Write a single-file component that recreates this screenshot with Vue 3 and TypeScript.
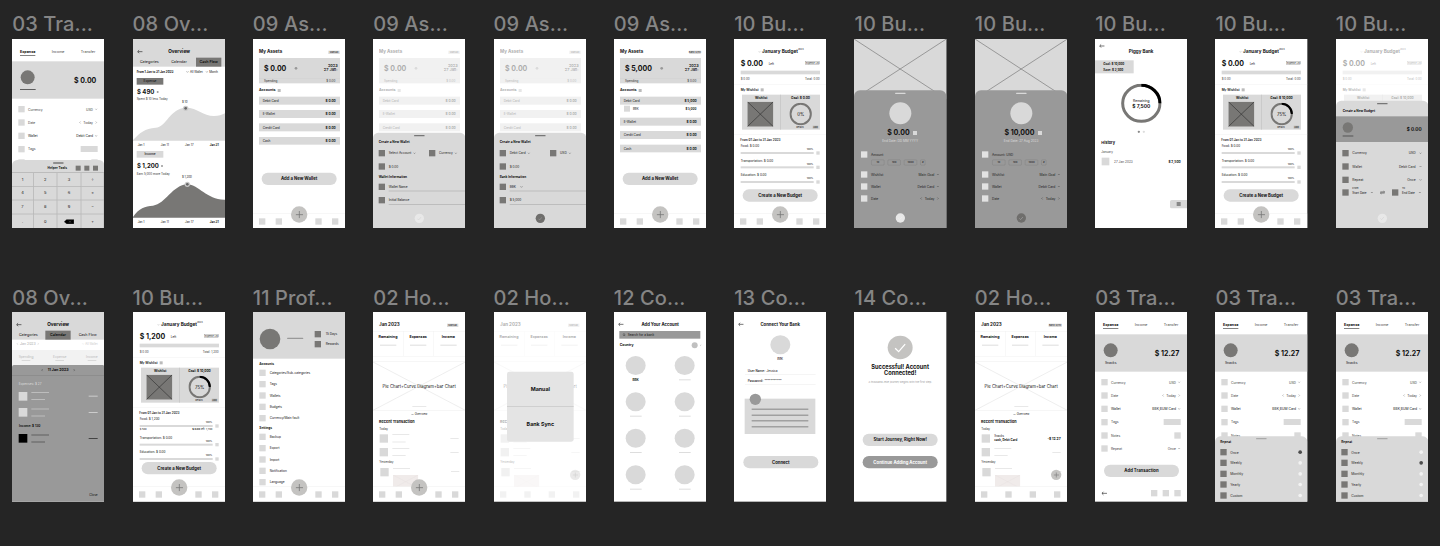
<script setup lang="ts">
import { h } from 'vue'
import type { FunctionalComponent } from 'vue'

type Kind =
  | 'transaction' | 'overview' | 'calendar' | 'assets' | 'budget' | 'wish'
  | 'piggy' | 'profile' | 'home' | 'bank' | 'connect' | 'success'

interface Board {
  name: string
  kind: Kind
  amount?: string
  sheet?: string
  faded?: boolean
  pct?: number
  selected?: number
  goal?: string
  filled?: boolean
}

const glyphs: Record<string, string> = {
  down: 'M2 4 L6 8 L10 4',
  up: 'M2 8 L6 4 L10 8',
  left: 'M8 2 L4 6 L8 10',
  right: 'M4 2 L8 6 L4 10',
  back: 'M12 6 H0.5 M4 2.5 L0.5 6 L4 9.5',
  check: 'M1 6.5 L4.5 10 L11 2.5',
  plus: 'M6 0 V12 M0 6 H12',
  swap: 'M0 4.5 H12 L9 2 M12 7.5 H0 L3 10',
  search: 'M8 8 L11.5 11.5 M9 5 A4 4 0 1 1 1 5 A4 4 0 1 1 9 5',
}

const Icon: FunctionalComponent<{ n: string }> = (p) =>
  h('svg', { viewBox: '0 0 12 12', class: 'ic' }, [
    h('path', { d: glyphs[p.n], fill: 'none', stroke: 'currentColor', 'stroke-width': 1.3 }),
  ])
Icon.props = ['n']

const rows: Board[][] = [
  [
    { name: '03 Tra...', kind: 'transaction', amount: '$ 0.00', sheet: 'keypad' },
    { name: '08 Ov...', kind: 'overview' },
    { name: '09 As...', kind: 'assets', amount: '$ 0.00' },
    { name: '09 As...', kind: 'assets', amount: '$ 0.00', sheet: 'wallet', faded: true },
    { name: '09 As...', kind: 'assets', amount: '$ 0.00', sheet: 'wallet', faded: true, filled: true },
    { name: '09 As...', kind: 'assets', amount: '$ 5,000', filled: true },
    { name: '10 Bu...', kind: 'budget', amount: '$ 0.00', pct: 0, goal: 'Goal: $ 0.00' },
    { name: '10 Bu...', kind: 'wish', amount: '$ 0.00' },
    { name: '10 Bu...', kind: 'wish', amount: '$ 10,000', filled: true },
    { name: '10 Bu...', kind: 'piggy' },
    { name: '10 Bu...', kind: 'budget', amount: '$ 0.00', pct: 75, goal: 'Goal: $ 10,000' },
    { name: '10 Bu...', kind: 'budget', amount: '$ 0.00', pct: 75, goal: 'Goal: $ 10,000', sheet: 'budget', faded: true },
  ],
  [
    { name: '08 Ov...', kind: 'calendar' },
    { name: '10 Bu...', kind: 'budget', amount: '$ 1,200', pct: 75, goal: 'Goal: $ 10,000', filled: true },
    { name: '11 Prof...', kind: 'profile' },
    { name: '02 Ho...', kind: 'home', sheet: 'fab' },
    { name: '02 Ho...', kind: 'home', sheet: 'modal', faded: true },
    { name: '12 Co...', kind: 'bank' },
    { name: '13 Co...', kind: 'connect' },
    { name: '14 Co...', kind: 'success' },
    { name: '02 Ho...', kind: 'home', filled: true },
    { name: '03 Tra...', kind: 'transaction', amount: '$ 12.27', filled: true },
    { name: '03 Tra...', kind: 'transaction', amount: '$ 12.27', filled: true, sheet: 'repeat', selected: 0 },
    { name: '03 Tra...', kind: 'transaction', amount: '$ 12.27', filled: true, sheet: 'repeat', selected: 1 },
  ],
]

const keys = ['1', '2', '3', '÷', '4', '5', '6', '×', '7', '8', '9', '−', '.', '0', 'del', '+']
const repeats = ['Once', 'Weekly', 'Monthly', 'Yearly', 'Custom']
const accounts = ['Debit Card', 'E-Wallet', 'Credit Card', 'Cash']
const categories = ['Food', 'Transportation', 'Education']
const profile = [
  { title: 'Accounts', items: ['Categories/Sub-categories', 'Tags', 'Wallets', 'Budgets', 'Currency/Main fault'] },
  { title: 'Settings', items: ['Backup', 'Export', 'Import', 'Notification', 'Language'] },
]
const charts = [
  {
    tag: 'Expense', dark: false, total: '$ 490', note: 'Spent $ 10 less Today', point: '$ 10', cx: 158, cy: 8,
    d: 'M0 105 V103 C22 80 35 69 68 66 C100 64 112 7 158 6 C195 6 210 31 243 31 C257 31 268 27 277 22 V105 Z',
  },
  {
    tag: 'Income', dark: true, total: '$ 1,200', note: 'Earn 5,000 more Today', point: '$ 1,200', cx: 163, cy: 5,
    d: 'M0 105 V103 C18 76 36 71 60 69 C98 64 118 7 163 5 C198 6 222 53 277 51 V105 Z',
  },
]
</script>

<template>
  <main class="canvas">
    <section v-for="(row, ri) in rows" :key="ri" class="strip" :class="{ second: ri === 1 }">
      <div v-for="(b, bi) in row" :key="bi" class="slot">
        <div class="name">{{ b.name }}</div>
        <div class="frame">
          <article class="board">
            <!-- Transaction -->
            <template v-if="b.kind === 'transaction'">
              <nav class="tx-tabs"><b>Expense</b><span>Income</span><span>Transfer</span></nav>
              <div class="tx-hero">
                <div class="who">
                  <i class="avatar"></i>
                  <span v-if="b.filled">Snacks</span><i v-else class="rule"></i>
                </div>
                <strong class="amount">{{ b.amount }}</strong>
              </div>
              <div class="tx-rows">
                <div class="line"><i class="sq"></i>Currency<span class="end">USD <Icon n="down" /></span></div>
                <div class="line"><i class="sq"></i>Date<span class="end"><Icon n="left" /> Today <Icon n="right" /></span></div>
                <div class="line dk"><i class="sq"></i>Wallet<span class="end">{{ b.filled ? 'BBK,BUM Card' : 'Debit Card' }} <Icon n="down" /></span></div>
                <div class="line"><i class="sq"></i>Tags<i class="end tagbox"></i></div>
                <div class="line"><i class="sq"></i>Notes<i class="end sq"></i></div>
                <div class="line"><i class="sq"></i>Repeat<span class="end">Once <Icon n="down" /></span></div>
              </div>
              <template v-if="!b.sheet">
                <div class="pill tx-pill">Add Transaction</div>
                <div class="tx-foot"><Icon n="back" class="back" /><i class="sq"></i><i class="sq"></i><i class="sq"></i></div>
              </template>
              <div v-else-if="b.sheet === 'keypad'" class="sheet keypad">
                <i class="handle"></i>
                <div class="tools"><b>Helper Tools</b><i></i><i></i><i></i></div>
                <div class="keys">
                  <span v-for="k in keys" :key="k">
                    <svg v-if="k === 'del'" class="del" viewBox="0 0 30 14"><path d="M0 7 L8 0 H30 V14 H8 Z M15 4 L21 10 M21 4 L15 10" stroke="#999" /></svg>
                    <template v-else>{{ k }}</template>
                  </span>
                </div>
              </div>
              <div v-else class="sheet repeat">
                <i class="handle lt"></i>
                <b>Repeat</b>
                <div v-for="(r, i) in repeats" :key="r" class="opt">
                  <i class="sq dark"></i>{{ r }}<i class="radio" :class="{ on: i === b.selected }"></i>
                </div>
              </div>
            </template>

            <!-- Overview -->
            <template v-else-if="b.kind === 'overview' || b.kind === 'calendar'">
              <header class="ov-head">
                <div class="ov-title"><Icon n="back" class="back" /><strong>Overview</strong></div>
                <nav>
                  <span>Categories</span>
                  <span :class="{ on: b.kind === 'calendar' }">Calendar</span>
                  <span :class="{ on: b.kind === 'overview' }">Cash Flow</span>
                </nav>
              </header>
              <template v-if="b.kind === 'overview'">
                <div class="ov-range"><b>From 1 Jan to 31 Jan 2023</b><span><Icon n="down" /> All Wallet</span><span><Icon n="down" /> Month</span></div>
                <section v-for="c in charts" :key="c.tag" class="flow" :class="{ dark: c.dark }">
                  <div class="tag">{{ c.tag }}</div>
                  <div class="total">{{ c.total }} <i></i></div>
                  <div class="note">{{ c.note }}</div>
                  <div class="point">{{ c.point }}</div>
                  <svg class="plot" viewBox="0 0 277 105">
                    <path :d="c.d" :fill="c.dark ? '#787775' : '#d9d9d9'" />
                    <circle :cx="c.cx" :cy="c.cy" r="8" fill="#c8c8c8" /><circle :cx="c.cx" :cy="c.cy" r="4" fill="#666" />
                  </svg>
                  <div class="axis"><span>Jan 1</span><span>Jan 11</span><span>Jan 17</span><b>Jan 31</b></div>
                </section>
              </template>
              <template v-else>
                <div class="cal-month"><span><Icon n="left" /> Jan 2023 <Icon n="right" /></span><small><Icon n="down" /> All Wallet</small></div>
                <div class="cal-sums"><span>Spending</span><span>Expense</span><span>Income</span></div>
                <div class="cal-body">
                  <div class="cal-day"><Icon n="left" /><b>11 Jan 2023</b><Icon n="right" /></div>
                  <div class="cal-cap">Expenses: $ 27</div>
                  <div v-for="n in 2" :key="n" class="cal-item"><i class="pic"></i><div><i></i><i></i></div><i class="val"></i></div>
                  <div class="cal-cap blk">Income: $ 130</div>
                  <div class="cal-item blk"><i class="pic"></i><div><i></i><i></i></div><i class="val"></i></div>
                  <div class="cal-close">Close</div>
                </div>
              </template>
            </template>

            <!-- Assets -->
            <template v-else-if="b.kind === 'assets'">
              <div class="content as" :class="{ faded: b.faded }">
                <div class="as-top"><strong>My Assets</strong><em>{{ b.filled && !b.faded ? 'Bank Sync' : 'Manual' }}</em></div>
                <div class="as-card">
                  <div class="as-main"><strong class="amount">{{ b.amount }}</strong><i></i><b>2023<br>27 Jan<u>›</u></b></div>
                  <div class="as-sub"><span>Spending</span><span>$ 0.00</span></div>
                </div>
                <div class="as-cap"><b>Accounts</b><i></i></div>
                <template v-for="(a, i) in accounts" :key="a">
                  <div class="as-row"><span>{{ a }}</span><b>{{ b.filled && !b.faded && i === 0 ? '$ 5,000' : '$ 0.00' }}</b></div>
                  <div v-if="b.filled && !b.faded && i === 0" class="as-child"><i class="sq"></i>BBK<b>$ 5,000</b></div>
                </template>
                <div class="pill as-pill" :class="{ tight: b.filled }">Add a New Wallet</div>
              </div>
              <div v-if="b.sheet" class="sheet wallet">
                <i class="handle"></i>
                <b class="cap">Create a New Wallet</b>
                <div class="two">
                  <div><i class="sq dark"></i>{{ b.filled ? 'Debit Card' : 'Select Account' }} <Icon n="down" /></div>
                  <div><i class="sq dark"></i>{{ b.filled ? 'USD' : 'Currency' }} <Icon n="down" /></div>
                </div>
                <div class="one"><i class="sq dark"></i>$ 0.00</div>
                <b class="cap">{{ b.filled ? 'Bank Information' : 'Wallet Information' }}</b>
                <div class="field"><i class="sq dark"></i><span>{{ b.filled ? 'BBK' : 'Wallet Name' }} <Icon v-if="b.filled" n="down" /></span></div>
                <div class="field"><i class="sq dark"></i><span>{{ b.filled ? '$ 5,000' : 'Initial Balance' }}</span></div>
                <div class="ok" :class="{ dk: b.filled }"><Icon n="check" /></div>
              </div>
            </template>

            <!-- Budget -->
            <template v-else-if="b.kind === 'budget'">
              <div class="content bu" :class="{ faded: b.faded, more: b.filled }">
                <div class="bu-title"><Icon n="down" /><strong>January Budget</strong><sup>2023</sup></div>
                <div class="bu-amt"><strong class="amount">{{ b.amount }}</strong><span>Left</span><em>Expense List</em></div>
                <div class="bu-bar"></div>
                <div class="bu-lab"><span>$ 0.00</span><span>Total: {{ b.filled ? '1,200' : '0.00' }}</span></div>
                <div class="bu-cap"><b>My Wishlist</b><i></i></div>
                <div class="bu-card">
                  <div>
                    <b>Wishlist</b>
                    <svg class="cross" viewBox="0 0 78 75"><rect width="78" height="75" fill="#787775" /><path d="M0 0 L78 75 M78 0 L0 75" stroke="#333" stroke-width="2" /></svg>
                  </div>
                  <div>
                    <b>{{ b.goal }}</b>
                    <svg class="ring" viewBox="0 0 68 68">
                      <circle cx="34" cy="34" r="30.5" fill="none" stroke="#787775" stroke-width="6" />
                      <path v-if="b.pct" d="M34 3.5 A30.5 30.5 0 0 1 64.5 34" fill="none" stroke="#000" stroke-width="6" />
                      <text x="34" y="39" text-anchor="middle" font-size="13">{{ b.pct }}%</text>
                    </svg>
                    <small>Details ⌵<em>Add</em></small>
                  </div>
                </div>
                <div class="bu-range">From 01 Jan to 31 Jan 2023</div>
                <div v-for="(c, i) in categories" :key="c" class="bu-cat">
                  <div class="cl">{{ c }}: $ {{ b.filled && i === 0 ? '1,200' : '0.00' }}</div>
                  <div class="cv">100%</div>
                  <div class="cb"><i></i><u></u></div>
                  <div v-if="b.filled && i === 0" class="cx"><span>$ 500</span><span><b>$ 0.00</b> left: 1,700</span></div>
                </div>
                <div class="pill bu-pill">Create a New Budget</div>
              </div>
              <div v-if="b.sheet" class="sheet newbudget">
                <i class="handle"></i>
                <b class="cap">Create a New Budget</b>
                <div class="band"><div><i></i><u></u></div><strong>$ 0.00</strong></div>
                <div class="nb-row"><i class="sq dark"></i>Currency<span>USD <Icon n="down" /></span></div>
                <div class="nb-row"><i class="sq dark"></i>Wallet<span>Debit Card <Icon n="down" /></span></div>
                <div class="nb-row"><i class="sq dark"></i>Repeat<span>Once <Icon n="down" /></span></div>
                <div class="nb-dates">
                  <i class="sq dark"></i><div><small>From</small>Start Date</div><Icon n="down" />
                  <Icon n="swap" class="swap" />
                  <i class="sq dark"></i><div><small>To</small>End Date</div><Icon n="down" />
                </div>
                <div class="ok"><Icon n="check" /></div>
              </div>
            </template>

            <!-- Wish -->
            <template v-else-if="b.kind === 'wish'">
              <svg class="cover" viewBox="0 0 277 180"><rect width="277" height="180" fill="#d9d9d9" /><path d="M0 0 L277 180 M277 0 L0 180" stroke="#777" stroke-width="2" /></svg>
              <div class="sheet wish">
                <i class="handle wt"></i>
                <i class="disc"></i>
                <div class="w-amt"><strong>{{ b.amount }}</strong><i></i></div>
                <div class="w-date">{{ b.filled ? 'End Date: 27 Aug 2023' : 'End Date: DD MM YYYY' }}</div>
                <div class="w-row"><i class="sq"></i>{{ b.filled ? 'Amount: USD' : 'Amount' }}</div>
                <div class="w-chips"><span>10</span><span>100</span><span>1000</span><span>#</span></div>
                <div class="w-row"><i class="sq"></i>Wishlist<span>Main Goal <Icon n="down" /></span></div>
                <div class="w-row"><i class="sq"></i>Wallet<span>Debit Card <Icon n="down" /></span></div>
                <div class="w-row"><i class="sq"></i>Date<span><Icon n="left" /> Today <Icon n="right" /></span></div>
                <div class="ok" :class="{ dk: b.filled }"><Icon n="check" /></div>
              </div>
            </template>

            <!-- Piggy bank -->
            <template v-else-if="b.kind === 'piggy'">
              <div class="pg-back"><Icon n="back" class="back" /></div>
              <strong class="pg-title">Piggy Bank</strong>
              <div class="pg-tag"><b>Goal: $ 10,000</b><b>Save: $ 2,500</b></div>
              <div class="pg-ring">
                <svg viewBox="0 0 122 118">
                  <ellipse cx="61" cy="59" rx="56" ry="54" fill="none" stroke="#787775" stroke-width="9" />
                  <path d="M61 5 A56 54 0 0 1 117 59" fill="none" stroke="#000" stroke-width="9" />
                  <text x="61" y="54" text-anchor="middle" font-size="10">Remaining</text>
                  <text x="61" y="74" text-anchor="middle" font-size="15" font-weight="600">$ 7,500</text>
                </svg>
              </div>
              <div class="pg-dots"><i></i><i></i></div>
              <b class="pg-h">History</b>
              <span class="pg-m">January</span>
              <div class="pg-row"><i></i>27 Jan 2023<b>$ 2,500</b></div>
              <div class="pg-tool"><i></i></div>
            </template>

            <!-- Profile -->
            <template v-else-if="b.kind === 'profile'">
              <div class="pf-hero">
                <i class="face"></i><i class="nm"></i>
                <div><span><i class="sq dark"></i>15 Days</span><span><i class="sq dark"></i>Rewards</span></div>
              </div>
              <div class="content pf">
                <section v-for="g in profile" :key="g.title">
                  <b>{{ g.title }}</b>
                  <div v-for="it in g.items" :key="it" class="pf-row"><i class="sq"></i>{{ it }}</div>
                </section>
              </div>
            </template>

            <!-- Home -->
            <template v-else-if="b.kind === 'home'">
              <div class="content hm" :class="{ faded: b.faded }">
                <div class="as-top" :class="{ wide: b.filled }"><strong>Jan 2023</strong><em>{{ b.filled ? 'Bank Sync' : 'Manual' }}</em></div>
                <div class="hm-cols"><div><b>Remaining</b><i></i></div><div><b>Expenses</b><i></i></div><div><b>Income</b><i></i></div></div>
                <div class="hm-chart">
                  <svg viewBox="0 0 277 145"><path d="M0 0 L277 145 M277 0 L0 145" stroke="#dcdcdc" stroke-width="1.5" /></svg>
                  <span>Pie Chart+Curve Diagram+bar Chart</span>
                  <u></u>
                </div>
                <div class="hm-ov"><Icon n="up" /> Overview</div>
                <b class="hm-h">Recent Transaction</b>
                <span class="hm-d">Today</span>
                <div class="hm-item">
                  <i></i>
                  <div v-if="b.filled" class="txt"><span>Snacks</span><b>cash, Debit Card</b></div>
                  <div v-else><u></u><u></u></div>
                  <b v-if="b.filled" class="v">-$ 12.27</b><u v-else class="v"></u>
                </div>
                <div class="hm-item"><i></i><div><u></u><u></u></div><u class="v"></u></div>
                <span class="hm-d">Yesterday</span>
                <div class="hm-item last"><i></i><div><u></u><svg viewBox="0 0 76 40"><rect width="76" height="40" fill="#f0ebea" /><path d="M0 0 L76 40 M76 0 L0 40" stroke="#e4dfde" /></svg></div><u class="v"></u></div>
              </div>
            </template>

            <!-- Bank list -->
            <template v-else-if="b.kind === 'bank'">
              <div class="co-title"><Icon n="back" class="back" /><strong>Add Your Account</strong></div>
              <div class="bk-search"><Icon n="search" /> Search for a bank</div>
              <div class="bk-country"><b>Country</b><i></i><Icon n="down" /></div>
              <div class="bk-grid"><div v-for="n in 8" :key="n"><i></i><b v-if="n === 1">BBK</b><u v-else></u></div></div>
            </template>

            <!-- Connect -->
            <template v-else-if="b.kind === 'connect'">
              <div class="co-title"><Icon n="back" class="back" /><strong>Connect Your Bank</strong></div>
              <i class="cn-logo"></i>
              <div class="cn-name">BBK</div>
              <div class="cn-field"><b>User Name:</b> Jessica</div>
              <div class="cn-field"><b>Password:</b> ***********</div>
              <div class="cn-note"><i class="dot"></i><u></u><u></u><u></u><u></u></div>
              <div class="pill cn-pill">Connect</div>
            </template>

            <!-- Success -->
            <template v-else>
              <div class="su-ok"><Icon n="check" /></div>
              <strong class="su-h">Successful! Account<br>Connected!</strong>
              <div class="su-p">A thousand-mile journey begins with the first step.</div>
              <div class="pill su-a">Start Journey, Right Now!</div>
              <div class="pill su-b">Continue Adding Account</div>
            </template>

            <!-- Bottom bar and overlays shared by the main screens -->
            <template v-if="['assets', 'budget', 'profile', 'home'].includes(b.kind)">
              <div v-if="b.kind === 'home' && b.sheet !== 'fab'" class="bar even" :class="{ faded: b.faded }"><i class="sq"></i><i class="sq"></i><i class="sq"></i><i class="sq"></i></div>
              <div v-else class="bar"><div><i class="sq"></i><i class="sq"></i></div><div><i class="sq"></i><i class="sq"></i></div></div>
              <div v-if="b.kind === 'home' && b.sheet !== 'fab'" class="fab small" :class="{ faded: b.faded }"><Icon n="plus" /></div>
              <div v-else-if="!b.faded" class="fab"><Icon n="plus" /></div>
              <div v-if="b.sheet === 'modal'" class="modal"><strong>Manual</strong><strong>Bank Sync</strong></div>
            </template>
          </article>
        </div>
      </div>
    </section>
  </main>
</template>

<style>
html, body { margin: 0; background: #252525; }
</style>

<style scoped>
.canvas { width: 1440px; height: 546px; overflow: hidden; background: #252525; box-sizing: border-box; padding: 10px 0 0 12.2px; font-family: Inter, "Liberation Sans", sans-serif; }
.strip { display: grid; grid-template-columns: repeat(12, 92.2px); column-gap: 28.15px; height: 274px; }
.name { height: 28.7px; line-height: 28px; font-size: 20px; font-weight: 500; letter-spacing: 0.1px; color: #858585; white-space: nowrap; }
.second .name { height: 28.3px; }
.frame { width: 92.3px; height: 189.6px; overflow: hidden; }

/* Artboards are authored at three times their displayed size. */
.board { width: 277px; height: 569px; transform: scale(0.33333); transform-origin: 0 0; position: relative; overflow: hidden; background: #fff; color: #111; display: flex; flex-direction: column; font-size: 10px; line-height: 1.2; white-space: nowrap; }
.board * { box-sizing: border-box; flex-shrink: 0; }
.board i, .board em { display: block; font-style: normal; }
.board u { text-decoration: none; display: block; }
b, strong { font-weight: 700; }
.ic { width: 9px; height: 9px; }
.back { width: 16px; height: 16px; }
.amount { font-size: 21px; }
.sq { width: 19px; height: 19px; background: #d9d9d9; }
.sq.dark { background: #787775; }
.content { flex: 1 1 0; min-height: 0; overflow: hidden; display: flex; flex-direction: column; }
.faded { opacity: 0.35; }
.pill { height: 37px; width: 225px; border-radius: 19px; background: #d9d9d9; font-size: 12.8px; font-weight: 700; display: flex; align-items: center; justify-content: center; }
.sheet { position: absolute; left: 0; right: 0; bottom: 0; background: #d9d9d9; border-radius: 16px 16px 0 0; overflow: hidden; display: flex; flex-direction: column; }
.handle { width: 32px; height: 4px; border-radius: 2px; background: #777; margin: 7px auto 0; }
.handle.lt { background: #aaa; margin-top: 5px; }
.handle.wt { background: #d9d9d9; }
.ok { width: 28px; height: 28px; border-radius: 50%; background: #e8e8e8; color: #ccc; display: flex; align-items: center; justify-content: center; margin: 0 auto; }
.ok .ic { width: 13px; height: 13px; }
.ok.dk { background: #6f6e6c; color: #aaa; }

.tx-tabs { height: 67px; padding: 13px 27px 0 24px; display: flex; align-items: center; justify-content: space-between; font-size: 11px; color: #444; }
.tx-tabs b { border-bottom: 2px solid #444; color: #111; padding-bottom: 1px; margin-top: 3px; }
.tx-hero { height: 112px; background: #d9d9d9; padding: 0 24px; display: flex; align-items: center; justify-content: space-between; }
.who { width: 46px; height: 62px; display: flex; flex-direction: column; align-items: center; margin-top: 3px; font-size: 10px; }
.avatar { width: 42px; height: 42px; border-radius: 50%; background: #787775; margin-bottom: 9px; }
.rule { width: 47px; height: 2px; background: #222; margin-top: 5px; }
.tx-hero .amount { margin-top: 6px; }
.tx-rows { padding: 12px 20px 0 19px; }
.line { height: 39.8px; display: flex; align-items: center; color: #444; }
.line > .sq:first-child { margin-right: 10px; }
.line.dk { color: #111; }
.end { margin-left: auto; }
.line span.end { display: flex; align-items: center; gap: 5px; }
.tagbox { width: 51px; height: 18px; background: #d9d9d9; }
.tx-pill { margin: 28px auto 0 27px; }
.tx-foot { display: flex; align-items: center; gap: 16px; padding: 0 20px; margin-top: 39px; height: 20px; }
.tx-foot .back { margin-right: auto; }
.keypad { top: 363px; background: #d9d9d9; }
.tools { height: 26px; display: flex; align-items: center; gap: 11px; padding-right: 19px; justify-content: flex-end; }
.tools b { margin-right: 15px; font-size: 9.5px; }
.tools i { width: 15px; height: 15px; background: #787775; }
.keys { flex: 1; display: grid; grid-template-columns: 65px 71px 72px 69px; grid-template-rows: 41px 41px 42px 45px; border-top: 2px solid #aeaeae; }
.keys span { display: flex; align-items: center; justify-content: center; font-size: 12px; border-right: 2px solid #b2b2b2; border-bottom: 2px solid #b2b2b2; }
.del { width: 30px; height: 14px; }
.repeat { top: 373px; }
.repeat > b { margin: 3px 0 8px 16px; font-size: 9.5px; }
.opt { height: 32.4px; display: flex; align-items: center; padding: 0 16px; color: #222; }
.opt .sq { margin-right: 11px; }
.radio { width: 11px; height: 11px; border-radius: 50%; background: #f2f2f2; margin-left: auto; }
.radio.on { background: #4c4c4c; }

.ov-head { height: 83px; background: #d9d9d9; padding-top: 24px; }
.ov-title { height: 27px; display: flex; align-items: center; justify-content: center; position: relative; font-size: 14px; }
.ov-title .back, .co-title .back { position: absolute; left: 13px; }
.ov-head nav { display: grid; grid-template-columns: repeat(3, 76px); gap: 13px; padding-left: 11px; margin-top: 5px; font-size: 11px; }
.ov-head nav span { height: 27px; display: flex; align-items: center; justify-content: center; }
.ov-head nav .on { background: #787775; font-weight: 600; }
.ov-range { height: 34px; display: flex; align-items: center; gap: 8px; padding: 0 22px 0 11px; font-size: 8.8px; }
.ov-range b { margin-right: auto; }
.tag { width: 80px; height: 20px; margin-left: 11px; background: #787775; display: flex; align-items: center; justify-content: center; font-size: 9.5px; font-weight: 500; }
.flow.dark .tag { background: #d9d9d9; }
.total { height: 30px; margin: 7px 0 0 12px; font-size: 18px; font-weight: 700; display: flex; align-items: center; gap: 7px; }
.total i { width: 6px; height: 6px; border-radius: 50%; background: #999; }
.note { margin-left: 11px; height: 14px; font-size: 9px; display: flex; align-items: center; color: #333; }
.point { height: 14px; margin-top: -5px; padding-left: 147px; font-size: 8.5px; }
.plot { display: block; width: 277px; height: 105px; margin-top: 3px; overflow: visible; }
.axis { height: 24px; display: flex; justify-content: space-between; align-items: center; padding: 0 20px 0 14px; font-size: 8.5px; }
.flow { height: 219px; }
.flow.dark .total { margin-top: 10px; }
.flow.dark .note { margin-top: 1px; }
.flow.dark .point { margin-top: -3px; }
.flow.dark .plot { margin-top: 9px; }
.cal-month { height: 31px; padding: 0 20px 3px 12px; display: flex; align-items: center; justify-content: space-between; color: #aaa; font-size: 10.5px; }
.cal-month small { font-size: 8.5px; color: #ccc; }
.cal-sums { height: 45px; background: #f2f2f2; display: flex; justify-content: space-between; padding: 13px 20px 0; color: #bbb; font-size: 10px; }
.cal-sums span { height: 22px; }
.cal-sums span::after { content: ""; display: block; width: 26px; height: 2px; margin: 6px auto 0; background: #ccc; }
.cal-body { flex: 1; background: #999; border-radius: 5px 5px 0 0; }
.cal-day { height: 32px; display: flex; align-items: center; justify-content: center; gap: 12px; border-bottom: 2px solid #888; font-size: 11px; }
.cal-cap { margin: 20px 0 6px 20px; font-size: 9.5px; color: #ddd; }
.cal-cap.blk { color: #000; margin: 12px 0 6px 21px; font-weight: 600; }
.cal-item { height: 48.5px; padding: 0 20px; display: flex; align-items: center; }
.cal-item .pic { width: 26px; height: 26px; background: #d9d9d9; margin-right: 12px; }
.cal-item div i { width: 53px; height: 2px; background: #d0d0d0; margin: 9px 0; }
.cal-item div i + i { width: 41px; margin-top: 19px; }
.cal-item .val { width: 27px; height: 3px; background: #ccc; margin-left: auto; }
.cal-item.blk .pic { background: #000; }
.cal-item.blk div i, .cal-item.blk .val { background: #444; }
.cal-close { text-align: right; padding-right: 20px; margin-top: 141px; font-size: 9.5px; }

.as-top { height: 57px; padding: 20px 17px 0 18px; display: flex; align-items: center; justify-content: space-between; font-size: 13.5px; }
.hm .as-top { padding-right: 21px; }
.hm .as-top.wide { padding-right: 17px; }
.as-top em { width: 34px; height: 10px; background: #d9d9d9; font-size: 7.5px; display: flex; align-items: center; justify-content: center; margin-top: 3px; }
.as-top.wide em { width: 39px; }
.as-card { width: 243px; height: 76px; margin-left: 18px; background: #d9d9d9; }
.as-main { height: 61px; border-bottom: 1px solid #cfcfcf; display: flex; align-items: center; padding: 2px 7px 0 15px; }
.as-main i { width: 8px; height: 8px; border-radius: 50%; background: #999; margin-left: 25px; }
.as-main > b { margin-left: auto; text-align: right; font-size: 11.5px; line-height: 12px; margin-bottom: 4px; font-weight: 600; }
.as-main b u { display: inline; color: #888; font-weight: 400; }
.as-sub { height: 15px; display: flex; align-items: center; justify-content: space-between; padding: 0 14px 0 15px; font-size: 9px; color: #333; }
.as-cap { height: 40px; padding: 3px 0 0 18px; display: flex; align-items: center; gap: 7px; font-size: 10.5px; }
.as-cap i, .bu-cap i { width: 9px; height: 9px; background: #bbb; }
.as-row { width: 243px; height: 23.5px; margin: 0 0 16.7px 18px; background: #d9d9d9; padding: 2px 13px 0 11px; display: flex; align-items: center; justify-content: space-between; font-size: 9.5px; }
.as-child { height: 26px; display: flex; align-items: center; padding: 0 30px; margin: -17px 0 14px; font-size: 8.5px; }
.as-child .sq { width: 18px; height: 18px; margin-right: 9px; }
.as-child b { margin-left: auto; }
.as-pill { margin: 67px 0 0 26px; }
.as-pill.tight { margin-top: 44px; }
.bar { height: 45px; border-top: 1px solid #e6e6e6; display: flex; align-items: center; justify-content: space-between; padding: 0 21px 0 18px; background: #fff; margin-top: auto; }
.bar div { display: flex; gap: 31px; }
.fab { position: absolute; left: 114px; top: 502px; width: 49px; height: 49px; border-radius: 50%; background: #c4c3c1; color: #777; display: flex; align-items: center; justify-content: center; }
.fab .ic { width: 22px; height: 22px; }
.fab.small { width: 31px; height: 31px; left: 228px; top: 473px; }
.fab.small .ic { width: 16px; height: 16px; }
.wallet { top: 281px; }
.wallet .cap, .newbudget .cap { font-size: 9.5px; margin-left: 17px; height: 12px; }
.wallet .cap { margin-top: 11px; }
.two { display: grid; grid-template-columns: 151px 1fr; margin-left: 17px; height: 54px; align-items: center; }
.two div, .one { display: flex; align-items: center; gap: 5px; color: #222; font-size: 9.5px; }
.wallet .sq { margin-right: 6px; }
.one { margin-left: 17px; height: 27px; }
.one + .cap { margin-top: 12px; }
.field { height: 28px; display: flex; align-items: center; margin: 9px 0 0 17px; font-size: 9.5px; }
.field + .field { margin-top: 12px; }
.field span { flex: 1; height: 28px; border-bottom: 2px solid #b0b0b0; display: flex; align-items: center; gap: 12px; padding-top: 2px; margin-left: 5px; }
.wallet .ok { margin-top: 27px; }

.bu-title { height: 58px; padding-top: 19px; display: flex; align-items: center; justify-content: center; font-size: 13.9px; padding-left: 5px; }
.bu-title .ic { width: 7px; margin-right: 4px; }
.bu-title sup { font-size: 7px; align-self: flex-start; margin-top: 7px; }
.bu-amt { height: 32px; padding: 2px 20px 0; display: flex; align-items: center; font-size: 9px; }
.bu-amt span { margin-left: 17px; }
.bu-amt em { margin-left: auto; border: 1px solid #777; font-size: 6.6px; width: 43px; height: 11px; display: flex; align-items: center; justify-content: center; margin-bottom: 5px; }
.bu-bar { width: 238px; height: 11px; margin: 5px 0 0 20px; background: #d9d9d9; }
.bu-lab { height: 32px; padding: 0 20px; display: flex; align-items: center; justify-content: space-between; font-size: 8.8px; border-bottom: 1px solid #e8e8e8; color: #333; }
.bu-cap { height: 29px; display: flex; align-items: center; gap: 6px; padding-left: 20px; font-size: 9.5px; }
.bu-cap b { font-weight: 600; }
.bu-card { width: 234px; height: 105px; margin-left: 24px; background: #d9d9d9; display: grid; grid-template-columns: 1fr 1fr; text-align: center; font-size: 9.5px; }
.bu-card > div { padding-top: 5px; display: flex; flex-direction: column; align-items: center; }
.bu-card > div:first-child { border-right: 2px solid #c4c4c4; }
.cross { width: 78px; height: 75px; margin-top: 5px; margin-right: 5px; }
.ring { width: 68px; height: 68px; margin-top: 8px; }
.bu-card small { font-size: 7px; width: 100%; display: flex; justify-content: flex-end; padding-right: 5px; gap: 20px; height: 9px; margin-top: 1px; }
.bu-card em { background: #bbb; width: 17px; }
.bu-range { height: 28px; margin-top: 14px; border-top: 1px solid #e8e8e8; padding: 3px 0 0 19px; display: flex; align-items: center; font-size: 9.2px; font-weight: 600; }
.bu-cat { height: 43.7px; padding: 0 20px; font-size: 9.3px; }
.cl { height: 14px; line-height: 14px; }
.cv { height: 10px; line-height: 9px; font-size: 7.5px; text-align: right; padding-right: 19px; margin-top: -1px; }
.cb { display: flex; align-items: center; gap: 8px; height: 9px; }
.cb i { flex: 1; height: 6px; background: #d9d9d9; }
.cb u { width: 10px; height: 10px; background: #d9d9d9; }
.cx { display: flex; justify-content: space-between; padding-right: 19px; font-size: 7.5px; margin-top: 2px; }
.more .bu-cat { height: 43px; }
.more .bu-range + .bu-cat { height: 56px; }
.bu-pill { margin: 6px 0 0 26px; }
.more .bu-pill { margin-top: -6px; position: relative; }
.newbudget { top: 185px; }
.newbudget .cap { margin: 13px 0 11px 20px; }
.band { height: 77px; background: #999; display: flex; align-items: center; justify-content: space-between; padding: 2px 20px 0; }
.band i { width: 31px; height: 31px; border-radius: 50%; background: #787775; margin-top: -2px; }
.band u { width: 32px; height: 2px; background: #333; margin-top: 9px; }
.band strong { font-size: 14px; }
.nb-row { height: 40.3px; display: flex; align-items: center; padding: 0 19px; color: #222; }
.band + .nb-row { margin-top: 13px; }
.nb-row .sq { margin-right: 11px; }
.nb-row span { margin-left: auto; display: flex; align-items: center; gap: 10px; }
.nb-dates { height: 36px; display: flex; align-items: center; padding: 0 19px; font-size: 9px; }
.nb-dates div { width: 44px; margin-left: 11px; padding-bottom: 10px; }
.nb-dates small { display: block; font-size: 7.5px; margin-bottom: 5px; }
.nb-dates .ic { margin-left: 10px; }
.nb-dates .swap { width: 17px; height: 13px; margin: 0 20px 0 19px; }
.nb-dates div + .ic:last-child { margin-left: 5px; }
.newbudget .ok { margin-top: 45px; }

.cover { width: 277px; height: 180px; }
.wish { top: 154px; background: #999; border-radius: 18px 18px 0 0; }
.disc { width: 66px; height: 66px; border-radius: 50%; background: #d9d9d9; margin: 25px auto 0; }
.w-amt { height: 30px; margin-top: 11px; display: flex; align-items: center; justify-content: center; gap: 10px; font-size: 21px; padding-left: 12px; }
.w-amt i { width: 12px; height: 12px; background: #d9d9d9; }
.w-date { text-align: center; height: 16px; line-height: 18px; font-size: 9.5px; color: #ddd; }
.w-row { height: 36px; display: flex; align-items: center; padding: 0 21px; color: #222; }
.w-date + .w-row { margin-top: 16px; height: 34px; }
.w-row .sq { margin-right: 11px; background: #e2e2e2; }
.w-row span { margin-left: auto; display: flex; align-items: center; gap: 6px; }
.w-chips { display: flex; gap: 10px; margin: -1px 0 9px 52px; }
.w-chips span { width: 39px; height: 17px; border: 1px solid #7a7a7a; border-radius: 3px; font-size: 8px; display: flex; align-items: center; justify-content: center; }
.w-chips span:last-child { width: 15px; }
.wish .ok { margin-top: 27px; color: #f4f4f4; }
.wish .ok.dk { color: #bbb; }

.pg-back { height: 28px; padding: 13px 0 0 13px; }
.pg-title { text-align: center; font-size: 13.5px; margin-top: 2px; height: 16px; }
.pg-tag { width: 116px; height: 39px; margin-top: 18px; background: #d9d9d9; padding: 6px 0 0 25px; font-size: 8.8px; display: flex; flex-direction: column; gap: 6px; }
.pg-ring { margin: 31px 0 0 78px; width: 122px; height: 118px; }
.pg-dots { display: flex; gap: 8px; justify-content: center; margin-top: 23px; }
.pg-dots i { width: 7px; height: 7px; border-radius: 50%; background: #888; }
.pg-dots i + i { background: #ddd; }
.pg-h { margin: 23px 0 0 19px; font-size: 11.5px; }
.pg-m { margin: 15px 0 0 19px; font-size: 9px; color: #444; }
.pg-row { display: flex; align-items: center; padding: 0 20px; margin-top: 11px; height: 24px; font-size: 9.5px; color: #444; }
.pg-row i { width: 23px; height: 23px; background: #d9d9d9; margin-right: 14px; }
.pg-row b { margin-left: auto; color: #111; }
.pg-tool { width: 52px; height: 25px; background: #d9d9d9; border-radius: 5px 0 0 5px; margin: 103px 0 0 auto; display: flex; align-items: center; justify-content: center; }
.pg-tool i { width: 12px; height: 12px; background: #888; }

.pf-hero { height: 140px; background: #d9d9d9; display: flex; align-items: center; padding: 22px 21px 0 20px; }
.face { width: 62px; height: 62px; border-radius: 50%; background: #787775; }
.nm { width: 49px; height: 4px; border-radius: 2px; background: #999; margin: 0 0 4px 20px; }
.pf-hero div { margin-left: 34px; display: flex; flex-direction: column; gap: 11px; }
.pf-hero span { display: flex; align-items: center; gap: 14px; font-size: 9.5px; }
.pf { font-size: 9.5px; }
.pf b { display: flex; align-items: center; height: 29px; padding-left: 19px; margin-bottom: -3px; }
.pf section + section b { height: 23px; margin-bottom: 0; }
.pf-row { height: 33.8px; display: flex; align-items: center; gap: 12px; padding-left: 19px; }

.hm-cols { height: 76px; display: grid; grid-template-columns: 91px 90px 96px; border: solid #e8e8e8; border-width: 1px 0; }
.hm-cols div { padding-top: 10px; font-size: 11px; display: flex; flex-direction: column; align-items: center; border-right: 1px solid #e8e8e8; }
.hm-cols i { width: 49px; height: 3px; background: #ddd; margin-top: 17px; }
.hm-cols div:last-child { border: 0; padding-right: 6px; }
.hm-chart { height: 146px; margin-top: 16px; border: solid #e4e4e4; border-width: 1px 0; display: grid; place-items: center; font-size: 12.8px; }
.hm-chart > * { grid-area: 1 / 1; }
.hm-chart svg { width: 277px; height: 145px; }
.hm-chart u { width: 42px; height: 2px; background: #ddd; align-self: end; margin-bottom: 10px; }
.hm-ov { height: 24px; display: flex; align-items: center; justify-content: center; gap: 2px; font-size: 8.5px; }
.hm-h { height: 20px; line-height: 19px; padding-left: 18px; font-size: 11.3px; }
.hm-d { height: 20px; line-height: 25px; padding-left: 19px; font-size: 9px; color: #333; }
.hm-item { height: 41px; display: flex; align-items: center; padding: 0 20px; }
.hm-item > i { width: 25px; height: 25px; background: #d9d9d9; margin-right: 13px; }
.hm-item div { display: flex; flex-direction: column; gap: 20px; margin-top: -2px; }
.hm-item u { width: 51px; height: 2px; background: #ddd; }
.hm-item div u + u { width: 40px; }
.hm-item .txt { gap: 3px; font-size: 8.5px; }
.hm-item u.v { width: 25px; margin-left: auto; }
.hm-item b.v { margin-left: auto; font-size: 10px; }
.hm-item + .hm-d { height: 18px; line-height: 20px; }
.hm-item.last { align-items: flex-start; padding: 9px 18px 0 22px; height: 60px; }
.hm-item.last div { margin-top: 0; gap: 19px; }
.hm-item.last svg { width: 76px; height: 40px; }
.hm-item.last u.v { margin-top: 10px; }
.modal { position: absolute; left: 39px; top: 179px; width: 200px; height: 210px; border-radius: 7px; background: #e4e4e4; display: grid; grid-template-rows: 1fr 1fr; font-size: 16px; }
.modal strong { display: flex; align-items: center; justify-content: center; }
.modal strong:first-child { border-bottom: 2px solid #c4c4c4; }

.co-title { height: 57px; padding-top: 17px; position: relative; display: flex; align-items: center; justify-content: center; font-size: 12.7px; }
.bk-search { width: 243px; height: 23px; margin-left: 16px; background: #999; display: flex; align-items: center; gap: 6px; padding-left: 10px; font-size: 9.5px; }
.bk-country { height: 39px; display: flex; align-items: center; gap: 6px; padding: 0 14px 0 17px; font-size: 10.5px; }
.bk-country i { width: 18px; height: 18px; border-radius: 50%; background: #c0c0c0; margin-left: auto; }
.bk-country .ic { width: 6px; }
.bk-grid { display: grid; grid-template-columns: 60px 60px; column-gap: 87px; grid-auto-rows: 109.2px; margin: 13px 0 0 35px; }
.bk-grid div { display: flex; flex-direction: column; align-items: center; }
.bk-grid i { width: 60px; height: 57px; border-radius: 50%; background: #d9d9d9; }
.bk-grid b { font-size: 9.5px; margin-top: 8px; }
.bk-grid u { width: 35px; height: 3px; background: #ddd; margin-top: 13px; }
.cn-logo { width: 60px; height: 57px; border-radius: 50%; background: #d9d9d9; margin: 13px auto 0; }
.cn-name { text-align: center; margin-top: 8px; height: 25px; font-size: 9px; }
.cn-field { height: 31px; width: 212px; margin-left: 33px; padding: 7px 0 0 8px; border-bottom: 1px solid #e2e2e2; font-size: 9.3px; display: flex; align-items: center; gap: 4px; }
.cn-field b { font-weight: 500; }
.cn-name + .cn-field { height: 28px; padding-top: 4px; }
.cn-note { width: 212px; height: 106px; margin: 41px 0 0 32px; background: #d9d9d9; padding: 30px 21px 0; position: relative; }
.cn-note .dot { position: absolute; left: 15px; top: -15px; width: 34px; height: 34px; border-radius: 50%; background: #999; }
.cn-note u { height: 3px; background: #858585; margin-bottom: 14.7px; }
.cn-pill { margin: 66px 0 0 28px; }
.su-ok { width: 75px; height: 71px; border-radius: 50%; background: #c4c3c1; color: #fff; display: flex; align-items: center; justify-content: center; margin: 71px auto 0; }
.su-ok .ic { width: 39px; height: 36px; }
.su-h { text-align: center; font-size: 17px; line-height: 20px; margin-top: 12px; }
.su-p { text-align: center; font-size: 8px; color: #999; margin-top: 11px; height: 10px; }
.su-a { margin: 150px 0 0 26px; }
.su-b { margin: 30px 0 0 26px; background: #999; color: #fff; }
</style>
